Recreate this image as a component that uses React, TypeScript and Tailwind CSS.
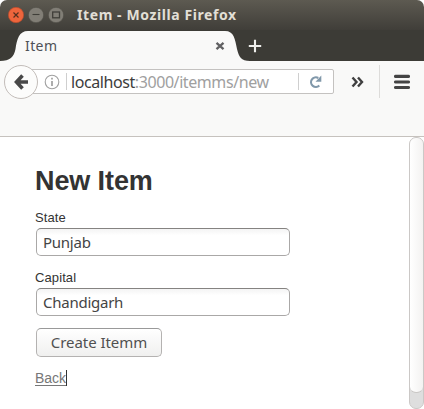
import React from 'react';

const ui = "font-['Noto_Sans','Open_Sans',sans-serif]";

function TitleBar() {
  return (
    <header className="flex h-[30px] items-center rounded-t-[7px] bg-linear-to-b from-[#5d5a51] to-[#403e39] pl-2">
      <div className="flex gap-1">
        <svg width="16" height="16" viewBox="0 0 16 16">
          <circle cx="8" cy="8" r="7.7" fill="#ee653c" stroke="#b9482a" strokeWidth=".6" />
          <path d="M5.5 5.5l5 5M10.500 5.500l-5 5" stroke="#56301f" strokeWidth="1.2" />
        </svg>
        <svg width="16" height="16" viewBox="0 0 16 16">
          <circle cx="8" cy="8" r="7.7" fill="#817e76" stroke="#4b4943" strokeWidth=".6" />
          <path d="M4.5 7.500h7" stroke="#3f3e39" strokeWidth="1.1" />
        </svg>
        <svg width="16" height="16" viewBox="0 0 16 16">
          <circle cx="8" cy="8" r="7.7" fill="#817e76" stroke="#4b4943" strokeWidth=".6" />
          <rect x="4.700" y="5" width="6.800" height="5.800" fill="none" stroke="#3f3e39" strokeWidth="1.300" />
        </svg>
      </div>
      <h1 className="ml-[13px] text-[14px] leading-5 font-bold tracking-[0.59px] whitespace-nowrap text-[#e2dfd6]">Item - Mozilla Firefox</h1>
    </header>
  );
}

function TabStrip() {
  return (
    <div className="relative h-[31px] bg-[#3c3b36]">
      <svg className="absolute top-0 left-0" width="260" height="31" viewBox="0 0 260 31">
        <path d="M0 31C10 31 14 27 15.500 19C17 9 19 1 28 1H225C234 1 235 9 237 19C239 27 241 31 250 31Z" fill="#f9f9f8" />
      </svg>
      <div className="relative flex h-full items-center">
        <span className="ml-[25px] w-[190px] text-[14px] leading-5 tracking-[0.4px] text-[#4e5056]">Item</span>
        <svg width="10" height="10" viewBox="0 0 10 10">
          <path d="M1.500 1.800l7 6.400M8.500 1.800L1.500 8.200" stroke="#606062" strokeWidth="2.300" />
        </svg>
        <svg className="ml-[23px]" width="14" height="14" viewBox="0 0 14 14">
          <path d="M7 .8v12.400M.8 7h12.400" stroke="#eeeeec" strokeWidth="2.100" />
        </svg>
      </div>
    </div>
  );
}

function Toolbar() {
  return (
    <div className="h-[76px] border-b border-[#c6c2be] bg-[#f9f9f8]">
      <div className="flex h-[41px] items-center">
        <div className="z-10 ml-1 flex size-[34px] items-center justify-center rounded-full border border-[#c3bdb9] bg-[#fcfcfb]">
          <svg width="16" height="18" viewBox="0 0 16 18">
            <path d="M9.500 2.500L3.500 9l6 6.500M4 9h11" fill="none" stroke="#484848" strokeWidth="3.600" />
          </svg>
        </div>
        <div className="-ml-[10px] flex h-[25px] w-[306px] shrink-0 items-center rounded-[2px] border border-[#c4c2c0] bg-white pl-[15px]">
          <svg width="16" height="16" viewBox="0 0 16 16">
            <circle cx="8" cy="8" r="6.800" fill="none" stroke="#a0a0a0" strokeWidth="1.100" />
            <path d="M8 7v5M8 3.700v1.800" stroke="#999" strokeWidth="1.600" />
          </svg>
          <span className="ml-[6px] h-[17px] w-px bg-[#cfcfcf]" />
          <span className="ml-[4px] w-[227px] text-[16px] leading-5 tracking-[-0.42px] whitespace-nowrap text-[#a0a0a0]">
            <span className="text-[#3c3c3c]">localhost</span>:3000/itemms/new
          </span>
          <span className="h-[17px] w-px bg-[#cfcfcf]" />
          <svg className="ml-[10px] shrink-0" width="13" height="13" viewBox="0 0 13 13">
            <path d="M9.300 3A4.800 4.800 0 1 0 10.300 10.500" fill="none" stroke="#8198aa" strokeWidth="2.100" />
            <path d="M12.300 .5v6.300H6.500z" fill="#8198aa" />
          </svg>
        </div>
        <svg className="ml-[17px]" width="13" height="12" viewBox="0 0 13 12">
          <path d="M1.500 1.500L5.500 6l-4 4.500M7 1.500L11 6l-4 4.500" fill="none" stroke="#404040" strokeWidth="2.400" />
        </svg>
        <span className="ml-[15px] h-[33px] w-px bg-[#dddcda]" />
        <svg className="ml-[14px]" width="16" height="16" viewBox="0 0 16 16">
          <path d="M1.500 2.400h13M1.500 8h13M1.500 13.500h13" stroke="#444" strokeWidth="3.100" strokeLinecap="round" />
        </svg>
      </div>
    </div>
  );
}

function Field({ label, value }: { label: string; value: string }) {
  return (
    <label className="block h-[60px] text-[13px] leading-[18px] tracking-[0.1px] text-[#333]">
      <span className="block h-[19px] font-['Liberation_Sans',Arial,sans-serif]">{label}</span>
      <input
        defaultValue={value}
        className={`${ui} ml-px block h-[28px] w-[254px] rounded-[5px] border border-[#aaa8a7] border-t-[#858381] bg-white bg-linear-to-b from-[#f4f4f4] to-white to-25% px-[6px] text-[15px] tracking-[-0.25px] text-[#444] outline-none`}
      />
    </label>
  );
}

export default function App() {
  return (
    <div className={`${ui} flex h-[409px] w-[424px] flex-col overflow-hidden bg-white`}>
      <TitleBar />
      <TabStrip />
      <Toolbar />
      <div className="flex min-h-0 flex-1">
        <main className="flex-1 pl-[35px]">
          <h2 className="mt-[27px] h-[45px] font-['Liberation_Sans',Arial,sans-serif] text-[27px] leading-[34px] font-bold tracking-[-0.1px] text-[#333]">New Item</h2>
          <Field label="State" value="Punjab" />
          <Field label="Capital" value="Chandigarh" />
          <button className="-mt-px ml-px block h-[29px] w-[126px] rounded-[5px] border border-[#b4b2b1] border-t-[#999] bg-linear-to-b from-white to-[#f0f0ef] text-[15px] tracking-[-0.05px] whitespace-nowrap text-[#505050]">Create Itemm</button>
          <div className="mt-[12px] flex h-[17px] items-center font-['Liberation_Sans',Arial,sans-serif] text-[14px] leading-4 text-[#777]">
            <a className="underline underline-offset-2">Back</a>
            <span className="h-4 w-px bg-[#333]" />
          </div>
        </main>
        <div className="flex w-[15px] flex-col overflow-hidden rounded-[7px] border border-[#cbc8c6] bg-[#dedede]">
          <div className="h-[255px] rounded-b-[6px] border-b border-[#c9c7c5] bg-linear-to-r from-white to-[#f3f2f1]" />
        </div>
      </div>
    </div>
  );
}
